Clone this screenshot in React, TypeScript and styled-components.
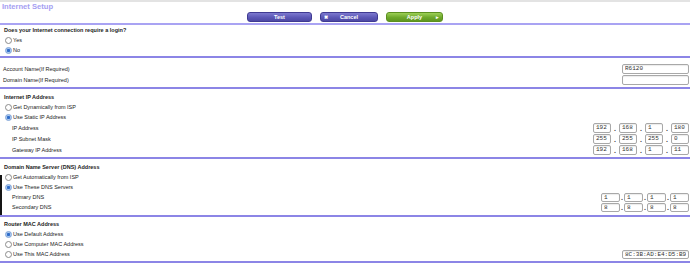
import React from 'react';
import styled, { createGlobalStyle } from 'styled-components';

const GlobalStyle = createGlobalStyle`
  html, body {
    margin: 0;
    padding: 0;
    background: #fff;
  }
  body {
    font-family: "Liberation Sans", Arial, sans-serif;
    color: #222;
  }
`;

const Page = styled.div`
  position: relative;
  width: 690px;
  height: 266px;
  overflow: hidden;
  box-sizing: border-box;
  border-top: 2px solid #e3e3e3;
  font-size: 5.5px;
`;

const Header = styled.header`
  height: 21px;
  border-bottom: 2px solid #a9a3f3;
  display: flex;
  flex-direction: column;
`;

const Title = styled.h1`
  margin: 0;
  padding-left: 2px;
  height: 10px;
  line-height: 10px;
  font-size: 7.6px;
  font-weight: bold;
  color: #a59ef2;
`;

const Toolbar = styled.div`
  height: 10px;
  display: flex;
  justify-content: center;
  gap: 8px;
`;

const Btn = styled.button<{ $w: number; $green?: boolean }>`
  position: relative;
  width: ${(p) => p.$w}px;
  height: 10px;
  padding: 0;
  border-radius: 3px;
  border: 1px solid ${(p) => (p.$green ? '#5b8f1f' : '#3f3a92')};
  background: ${(p) =>
    p.$green
      ? 'linear-gradient(#9ccf55, #6ea92c 55%, #5f9620)'
      : 'linear-gradient(#7d79cf, #5c58b6 55%, #4d48a4)'};
  color: #fff;
  font-family: "Liberation Sans", Arial, sans-serif;
  font-size: 5.5px;
  font-weight: bold;
  line-height: 8px;
  text-align: center;
`;

const BtnMark = styled.span<{ $right?: boolean }>`
  position: absolute;
  top: 0;
  ${(p) => (p.$right ? 'right: 3px;' : 'left: 3px;')}
  font-size: 5px;
  line-height: 8px;
`;

const Section = styled.section<{ $top: number; $bottom: number }>`
  padding: ${(p) => p.$top}px 1px ${(p) => p.$bottom}px 0;
  border-bottom: 2px solid #8c85e6;
`;

const Row = styled.div<{ $h: number }>`
  height: ${(p) => p.$h}px;
  display: flex;
  align-items: center;
  justify-content: space-between;
`;

const Heading = styled.div`
  font-weight: bold;
  padding-left: 4px;
`;

const RadioLabel = styled.label`
  display: flex;
  align-items: center;
  padding-left: 5px;
`;

const RadioDot = styled.span<{ $on?: boolean }>`
  width: 7px;
  height: 7px;
  margin-right: 1px;
  box-sizing: border-box;
  border-radius: 50%;
  border: 1px solid ${(p) => (p.$on ? '#7ea3d8' : '#8b8b8b')};
  background: ${(p) =>
    p.$on ? 'radial-gradient(circle, #2e6cc9 0 1.3px, #abc9ef 1.9px)' : '#fff'};
`;

const FieldLabel = styled.span<{ $indent: number }>`
  padding-left: ${(p) => p.$indent}px;
`;

const Field = styled.input<{ $w: number; $h: number }>`
  width: ${(p) => p.$w}px;
  height: ${(p) => p.$h}px;
  box-sizing: border-box;
  margin: 0;
  padding: 0 2px;
  border: 1px solid #a8a8a8;
  border-radius: 2px;
  background: #fff;
  box-shadow: inset 0 1px 1px rgba(0, 0, 0, 0.08);
  font-family: "Liberation Mono", "Courier New", monospace;
  font-size: 6px;
  color: #333;
  outline: none;
`;

const Quad = styled.div`
  display: flex;
  align-items: flex-end;
`;

const Dot = styled.span<{ $w: number }>`
  width: ${(p) => p.$w}px;
  text-align: center;
  font-size: 7px;
  line-height: 8px;
  font-weight: bold;
  color: #444;
`;

const EdgeMark = styled.div`
  position: absolute;
  left: 0;
  top: 173px;
  width: 2px;
  height: 40px;
  background: #151515;
`;

type QuadProps = { values: string[]; w: number; h: number; sep: number };

const IpQuad: React.FC<QuadProps> = ({ values, w, h, sep }) => (
  <Quad>
    {values.map((v, i) => (
      <React.Fragment key={i}>
        {i > 0 && <Dot $w={sep}>.</Dot>}
        <Field $w={w} $h={h} value={v} readOnly />
      </React.Fragment>
    ))}
  </Quad>
);

const Radio: React.FC<{ on?: boolean; children: React.ReactNode }> = ({ on, children }) => (
  <RadioLabel>
    <RadioDot $on={on} />
    {children}
  </RadioLabel>
);

export default function App() {
  return (
    <Page>
      <GlobalStyle />
      <Header>
        <Title>Internet Setup</Title>
        <Toolbar>
          <Btn $w={65}>Test</Btn>
          <Btn $w={58}>
            <BtnMark>✖</BtnMark>Cancel
          </Btn>
          <Btn $w={57} $green>
            Apply<BtnMark $right>▸</BtnMark>
          </Btn>
        </Toolbar>
      </Header>

      <Section $top={0} $bottom={1}>
        <Row $h={10}>
          <Heading>Does your Internet connection require a login?</Heading>
        </Row>
        <Row $h={10}>
          <Radio>Yes</Radio>
        </Row>
        <Row $h={10}>
          <Radio on>No</Radio>
        </Row>
      </Section>

      <Section $top={5} $bottom={2}>
        <Row $h={11}>
          <FieldLabel $indent={3}>Account Name(If Required)</FieldLabel>
          <Field $w={67} $h={10} value="R6120" readOnly />
        </Row>
        <Row $h={11}>
          <FieldLabel $indent={3}>Domain Name(If Required)</FieldLabel>
          <Field $w={67} $h={10} value="" readOnly />
        </Row>
      </Section>

      <Section $top={3} $bottom={2}>
        <Row $h={10}>
          <Heading>Internet IP Address</Heading>
        </Row>
        <Row $h={10}>
          <Radio>Get Dynamically from ISP</Radio>
        </Row>
        <Row $h={10}>
          <Radio on>Use Static IP Address</Radio>
        </Row>
        <Row $h={11}>
          <FieldLabel $indent={12}>IP Address</FieldLabel>
          <IpQuad values={['192', '168', '1', '180']} w={18} h={10} sep={8} />
        </Row>
        <Row $h={11}>
          <FieldLabel $indent={12}>IP Subnet Mask</FieldLabel>
          <IpQuad values={['255', '255', '255', '0']} w={18} h={10} sep={8} />
        </Row>
        <Row $h={11}>
          <FieldLabel $indent={12}>Gateway IP Address</FieldLabel>
          <IpQuad values={['192', '168', '1', '11']} w={18} h={10} sep={8} />
        </Row>
      </Section>

      <Section $top={3} $bottom={3}>
        <Row $h={10}>
          <Heading>Domain Name Server (DNS) Address</Heading>
        </Row>
        <Row $h={10}>
          <Radio>Get Automatically from ISP</Radio>
        </Row>
        <Row $h={10}>
          <Radio on>Use These DNS Servers</Radio>
        </Row>
        <Row $h={10}>
          <FieldLabel $indent={12}>Primary DNS</FieldLabel>
          <IpQuad values={['1', '1', '1', '1']} w={19} h={9} sep={4} />
        </Row>
        <Row $h={10}>
          <FieldLabel $indent={12}>Secondary DNS</FieldLabel>
          <IpQuad values={['8', '8', '8', '8']} w={19} h={9} sep={4} />
        </Row>
      </Section>

      <Section $top={2} $bottom={2}>
        <Row $h={10}>
          <Heading>Router MAC Address</Heading>
        </Row>
        <Row $h={10}>
          <Radio on>Use Default Address</Radio>
        </Row>
        <Row $h={10}>
          <Radio>Use Computer MAC Address</Radio>
        </Row>
        <Row $h={10}>
          <Radio>Use This MAC Address</Radio>
          <Field $w={67} $h={9} value="8C:3B:AD:E4:D5:B9" readOnly />
        </Row>
      </Section>

      <EdgeMark />
    </Page>
  );
}
